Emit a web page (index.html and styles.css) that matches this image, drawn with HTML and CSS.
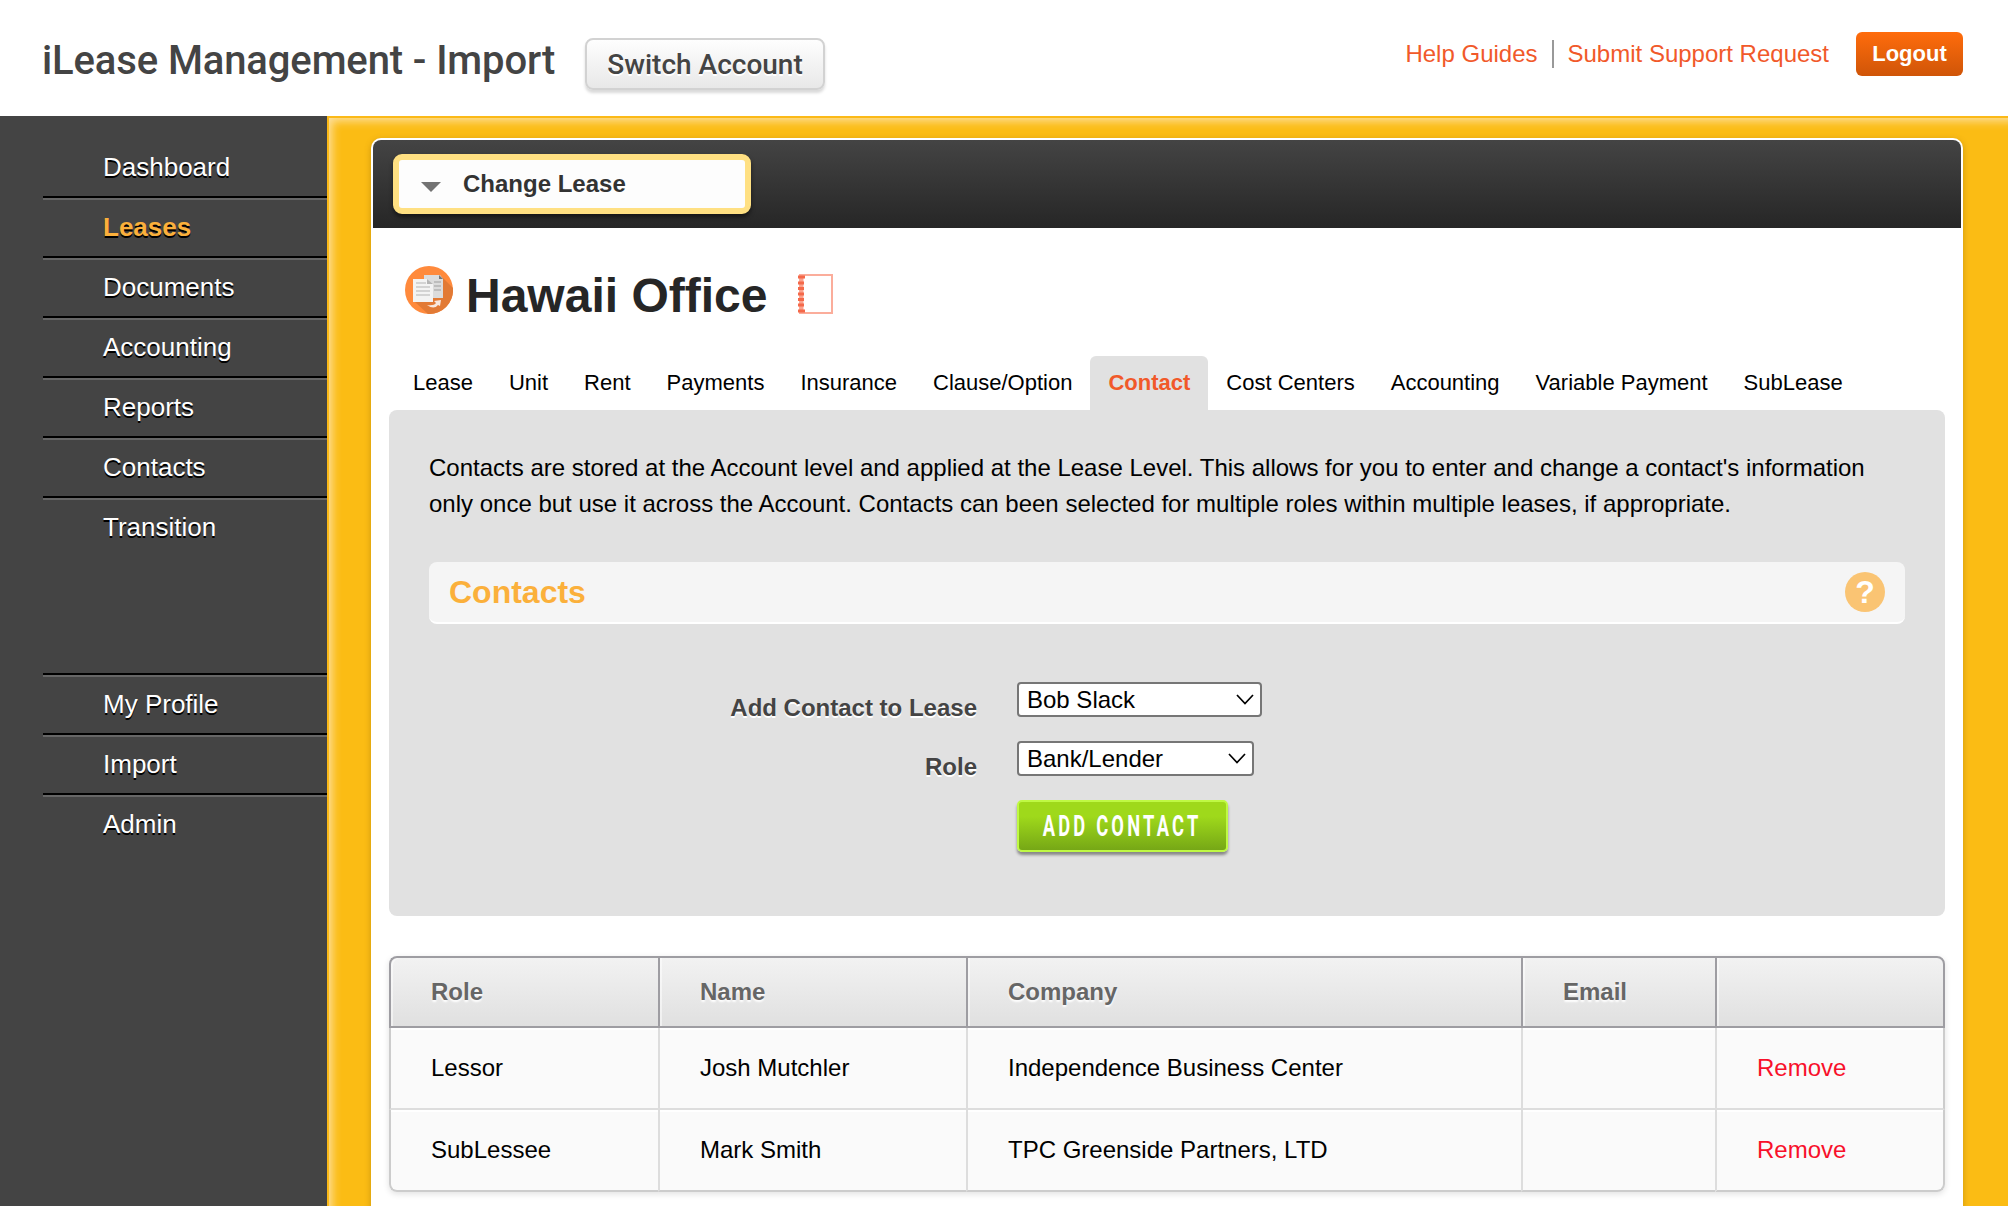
FILE: index.html
```html
<!DOCTYPE html>
<html lang="en">
<head>
  <meta charset="UTF-8">
  <title>iLease Management - Import</title>
  <link rel="stylesheet" href="styles.css">
</head>
<body>

<header class="header">
  <h1 class="site-title">iLease Management - Import</h1>
  <button class="switch-button">Switch Account</button>
  <nav class="header-links">
    <a href="#">Help Guides</a>
    <a href="#">Submit Support Request</a>
    <a href="#" class="logout">Logout</a>
  </nav>
</header>

<div class="wrapper">
  <aside class="sidebar">
    <ul class="menu">
      <li><a href="#">Dashboard</a></li>
      <li><a href="#" class="active">Leases</a></li>
      <li><a href="#">Documents</a></li>
      <li><a href="#">Accounting</a></li>
      <li><a href="#">Reports</a></li>
      <li><a href="#">Contacts</a></li>
      <li><a href="#">Transition</a></li>
    </ul>
    <ul class="menu menu-bottom">
      <li><a href="#">My Profile</a></li>
      <li><a href="#">Import</a></li>
      <li><a href="#">Admin</a></li>
    </ul>
  </aside>

  <div class="content">
    <main class="panel">
      <div class="toolbar">
        <div class="change-lease">
          <svg width="20" height="10" viewBox="0 0 20 10"><path d="M0 0h20L10 10z" fill="#737373"/></svg>
          <span>Change Lease</span>
        </div>
      </div>

      <div class="lease-heading">
        <svg class="lease-icon" width="48" height="48" viewBox="0 0 48 48">
          <circle cx="24" cy="24" r="24" fill="#ff8a3c"/>
          <path d="M38 12L48 22A24 24 0 0 1 23 48L10 36z" fill="#e27a35"/>
          <path d="M19 9h16l3 4v19H19z" fill="#dcdcdc"/>
          <path d="M34 9v4h4z" fill="#777"/>
          <path d="M29 16h7M29 20h7M29 24h7" stroke="#bdbdbd" stroke-width="2"/>
          <path d="M8 13h14l6 5v18H8z" fill="#f3f3f3"/>
          <path d="M22 13v5h6z" fill="#b5b5b5"/>
          <path d="M11 17h10M11 21h14M11 25h14M11 29h14" stroke="#d3d3d3" stroke-width="2"/>
          <path d="M22 39q7 1 9-2l-2-2 7-1-1 6-2-1q-4 5-11 0z" fill="#f8e8dd"/>
        </svg>
        <h2>Hawaii Office</h2>
        <svg class="book-icon" width="36" height="40" viewBox="0 0 36 40">
          <rect x="3" y="1" width="32" height="38" fill="#fff" stroke="#fbad9b" stroke-width="2"/>
          <path d="M4.5 1v38" stroke="#fba28e" stroke-width="4"/>
          <path d="M1 3h7M1 9h6M1 14.500h6M1 20h6M1 25.500h6M1 31h6M1 37h7" stroke="#f4694a" stroke-width="3"/>
        </svg>
      </div>

      <ul class="tabs">
        <li>Lease</li>
        <li>Unit</li>
        <li>Rent</li>
        <li>Payments</li>
        <li>Insurance</li>
        <li>Clause/Option</li>
        <li class="active">Contact</li>
        <li>Cost Centers</li>
        <li>Accounting</li>
        <li>Variable Payment</li>
        <li>SubLease</li>
      </ul>

      <section class="tab-content">
        <p class="intro">Contacts are stored at the Account level and applied at the Lease Level. This allows for you to enter and change a contact's information only once but use it across the Account. Contacts can been selected for multiple roles within multiple leases, if appropriate.</p>

        <div class="section-title">
          <h3>Contacts</h3>
          <span class="help">?</span>
        </div>

        <form class="contact-form">
          <label>Add Contact to Lease</label>
          <div class="select select-contact">Bob Slack
            <svg width="18" height="11" viewBox="0 0 18 11"><path d="M1 1l8 8.500L17 1" fill="none" stroke="#000" stroke-width="1.700"/></svg>
          </div>
          <label>Role</label>
          <div class="select select-role">Bank/Lender
            <svg width="18" height="11" viewBox="0 0 18 11"><path d="M1 1l8 8.500L17 1" fill="none" stroke="#000" stroke-width="1.700"/></svg>
          </div>
          <button type="button" class="add-button"><span>ADD CONTACT</span></button>
        </form>
      </section>

      <table class="contacts">
        <thead>
          <tr>
            <th class="col-role">Role</th>
            <th class="col-name">Name</th>
            <th class="col-company">Company</th>
            <th class="col-email">Email</th>
            <th></th>
          </tr>
        </thead>
        <tbody>
          <tr>
            <td>Lessor</td>
            <td>Josh Mutchler</td>
            <td>Independence Business Center</td>
            <td></td>
            <td><a href="#">Remove</a></td>
          </tr>
          <tr>
            <td>SubLessee</td>
            <td>Mark Smith</td>
            <td>TPC Greenside Partners, LTD</td>
            <td></td>
            <td><a href="#">Remove</a></td>
          </tr>
        </tbody>
      </table>
    </main>
  </div>
</div>

</body>
</html>
```
FILE: styles.css
```css
* {
  box-sizing: border-box;
}

body {
  margin: 0;
  height: 1206px;
  overflow: hidden;
  font-family: "Liberation Sans", Arial, sans-serif;
  font-size: 24px;
  color: #000;
  background: #fff;
}

h1, h2, h3, p, ul {
  margin: 0;
  padding: 0;
}

ul {
  list-style: none;
}

a {
  text-decoration: none;
}

/* header */
.header {
  display: flex;
  align-items: flex-start;
  height: 116px;
  padding: 0 45px 0 42px;
}

.site-title {
  width: 543px;
  padding-top: 37px;
  font-family: Roboto, sans-serif;
  font-size: 40px;
  font-weight: 500;
  letter-spacing: -0.12px;
  line-height: 47px;
  white-space: nowrap;
  color: #444;
}

.switch-button {
  width: 240px;
  height: 52px;
  margin-top: 38px;
  padding: 1px 0 0;
  border: 2px solid #d2d2d2;
  border-radius: 8px;
  background: linear-gradient(#fefefe, #e8e8e8);
  box-shadow: 0 3px 3px rgba(0, 0, 0, 0.15);
  font-family: Roboto, sans-serif;
  font-size: 28px;
  font-weight: 500;
  line-height: 47px;
  white-space: nowrap;
  color: #444;
  text-shadow: 0 2px 0 #fff;
}

.header-links {
  display: flex;
  align-items: center;
  margin-left: auto;
  margin-top: 32px;
}

.header-links a {
  height: 28px;
  line-height: 28px;
  color: #f1592a;
}

.header-links a:first-child {
  padding-right: 14px;
  border-right: 2px solid #999;
  margin-right: 14px;
}

.header-links .logout {
  width: 107px;
  height: 44px;
  margin-left: 27px;
  border-radius: 6px;
  background: linear-gradient(#ff6c0c, #cf5508);
  font-size: 22px;
  font-weight: bold;
  line-height: 43px;
  text-align: center;
  color: #fff;
}

/* sidebar */
.wrapper {
  display: flex;
  height: 1090px;
}

.sidebar {
  width: 327px;
  padding: 20px 0 0 43px;
  background: #444;
}

.menu li {
  height: 60px;
  padding-left: 60px;
  border-top: 2px solid #000;
  box-shadow: inset 0 2px 0 #666;
  font-size: 26px;
  line-height: 58px;
}

.menu:first-child li:first-child {
  border-color: transparent;
  box-shadow: none;
}

.menu a {
  color: #fff;
  text-shadow: 0 2px 0 #000;
}

.menu .active {
  font-weight: bold;
  color: #fbb03b;
}

.menu-bottom {
  margin-top: 117px;
}

/* main area */
.content {
  flex: 1;
  padding: 20px 45px 0 42px;
  border-top: 2px solid #fbb917;
  border-left: 2px solid #fbb917;
  background: #fbbc14;
  box-shadow: inset 7px 7px 10px -4px #fde0a0;
}

.panel {
  height: 1100px;
  padding: 2px;
  border-radius: 10px 10px 0 0;
  background: #fff;
  box-shadow: 0 2px 6px rgba(120, 80, 0, 0.35);
}

.toolbar {
  height: 88px;
  padding: 14px 20px;
  border-radius: 8px 8px 0 0;
  background: linear-gradient(#444, #262626);
}

.change-lease {
  display: flex;
  align-items: center;
  width: 358px;
  height: 60px;
  padding-left: 22px;
  border: 6px solid #ffe082;
  border-radius: 9px;
  background: #fdfdfd;
  box-shadow: 0 3px 4px rgba(0, 0, 0, 0.5);
  font-weight: bold;
  color: #333;
}

.change-lease svg {
  margin: 5px 22px 0 0;
}

.lease-heading {
  display: flex;
  height: 128px;
  padding: 38px 0 0 32px;
}

.lease-heading h2 {
  margin-left: 13px;
  font-size: 48px;
  line-height: 60px;
  color: #262626;
}

.book-icon {
  margin: 8px 0 0 30px;
}

.tabs {
  display: flex;
  height: 54px;
  padding-left: 22px;
  font-size: 22px;
  line-height: 54px;
}

.tabs li {
  padding: 0 18px;
}

.tabs .active {
  border-radius: 6px 6px 0 0;
  background: #e1e1e1;
  font-weight: bold;
  color: #f1592a;
}

.tab-content {
  height: 506px;
  margin: 0 16px;
  padding: 40px;
  border-radius: 8px;
  background: #e1e1e1;
}

.intro {
  line-height: 36px;
}

.section-title {
  display: flex;
  align-items: center;
  justify-content: space-between;
  height: 62px;
  margin-top: 40px;
  padding: 0 20px;
  border-bottom: 2px solid #fff;
  border-radius: 8px;
  background: #f5f5f5;
}

.section-title h3 {
  font-size: 32px;
  color: #fbb03b;
}

.help {
  width: 40px;
  height: 40px;
  border-radius: 50%;
  background: #fac473;
  font-size: 32px;
  font-weight: bold;
  line-height: 40px;
  text-align: center;
  color: #fff;
}

.contact-form {
  display: grid;
  grid-template-columns: 548px 1fr;
  grid-template-rows: 59px 59px 52px;
  column-gap: 40px;
  margin-top: 58px;
}

.contact-form label {
  padding-top: 12px;
  font-weight: bold;
  line-height: 28px;
  text-align: right;
  color: #444;
  text-shadow: 0 2px 0 #fff;
}

.select {
  display: flex;
  align-items: center;
  justify-content: space-between;
  height: 35px;
  padding: 0 6px 0 8px;
  border: 2px solid #767676;
  border-radius: 4px;
  background: #fff;
}

.select-contact {
  width: 245px;
}

.select-role {
  width: 237px;
}

.add-button {
  display: flex;
  align-items: center;
  justify-content: center;
  grid-column: 2;
  width: 211px;
  height: 52px;
  padding: 0;
  border: 2px solid #bff944;
  border-radius: 5px;
  background: linear-gradient(#9fd91b 30%, #76a716);
  box-shadow: 0 3px 3px rgba(0, 0, 0, 0.4);
  font-family: Roboto, sans-serif;
  font-size: 29.5px;
  font-weight: bold;
  letter-spacing: 5.2px;
  white-space: nowrap;
  color: #fff;
}

/* squeeze the label into a condensed face */
.add-button span {
  flex: none;
  transform: scaleX(0.62);
}

/* contacts table */
.contacts {
  width: 1556px;
  margin: 40px 16px 0;
  border-collapse: separate;
  border-spacing: 0;
  table-layout: fixed;
  border-radius: 8px;
  box-shadow: 0 2px 6px rgba(0, 0, 0, 0.12);
}

.contacts th {
  height: 72px;
  padding: 0 0 0 40px;
  border: solid #9e9da2;
  border-width: 2px 0 2px 2px;
  background: linear-gradient(#f2f2f2, #e0e0e0);
  box-shadow: inset 2px 0 0 rgba(255, 255, 255, 0.5);
  text-align: left;
  color: #666;
  text-shadow: 0 2px 2px #fff;
}

.contacts th:first-child {
  border-top-left-radius: 8px;
}

.contacts th:last-child {
  border-right-width: 2px;
  border-top-right-radius: 8px;
}

.contacts td {
  height: 82px;
  padding: 0 0 0 40px;
  border: solid #ddd;
  border-width: 0 0 2px 2px;
  background: #fafafa;
  box-shadow: inset 0 2px 0 #fff;
}

.contacts td:first-child {
  border-left-color: #ccc;
}

.contacts td:last-child {
  border-right: 2px solid #ccc;
}

.contacts tr:last-child td {
  border-bottom-color: #ccc;
}

.contacts tr:last-child td:first-child {
  border-bottom-left-radius: 8px;
}

.contacts tr:last-child td:last-child {
  border-bottom-right-radius: 8px;
}

.contacts a {
  color: #f8102a;
}

.col-role {
  width: 269px;
}

.col-name {
  width: 308px;
}

.col-company {
  width: 555px;
}

.col-email {
  width: 194px;
}
```
